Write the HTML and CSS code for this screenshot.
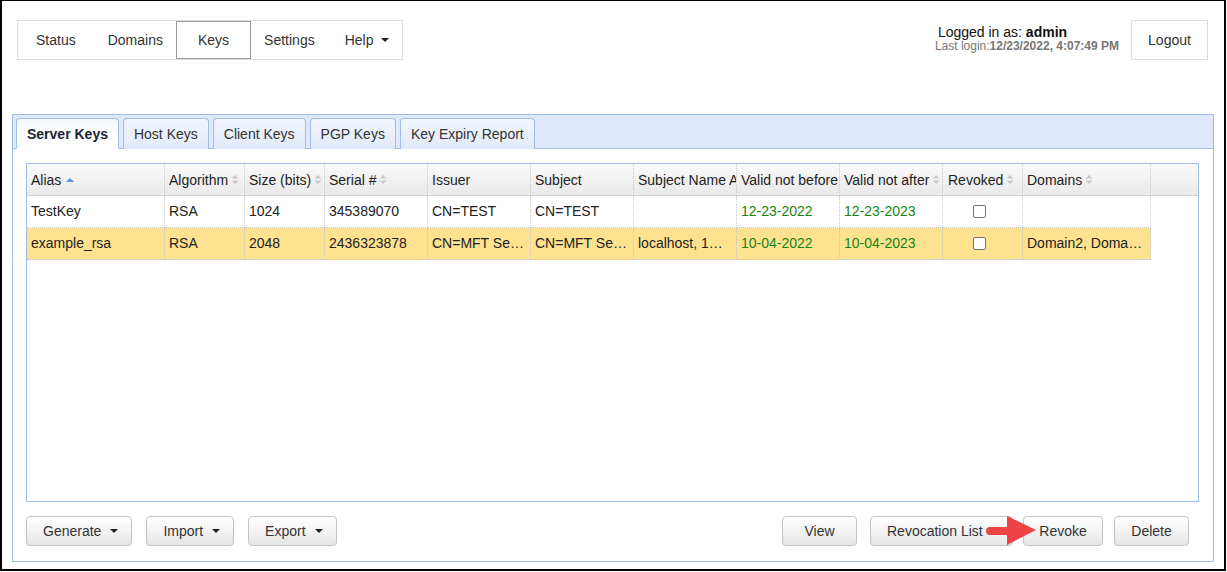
FILE: index.html
```html
<!DOCTYPE html>
<html lang="en">
<head>
<meta charset="utf-8">
<title>Keys</title>
<link rel="stylesheet" href="styles.css">
</head>
<body>
<div class="frame">
  <header class="topbar">
    <nav class="mainnav">
      <a class="nav-item nav-status">Status</a>
      <a class="nav-item nav-domains">Domains</a>
      <a class="nav-item nav-keys active">Keys</a>
      <a class="nav-item nav-settings">Settings</a>
      <a class="nav-item nav-help">Help<span class="caret"></span></a>
    </nav>
    <div class="user">
      <div class="user-line">Logged in as: <b>admin</b></div>
      <div class="user-last">Last login:<b>12/23/2022, 4:07:49 PM</b></div>
    </div>
    <button class="logout">Logout</button>
  </header>

  <section class="panel">
    <div class="tabstrip">
      <div class="tab active">Server Keys</div>
      <div class="tab">Host Keys</div>
      <div class="tab">Client Keys</div>
      <div class="tab">PGP Keys</div>
      <div class="tab">Key Expiry Report</div>
    </div>
    <div class="panel-body">
      <div class="grid">
        <div class="grid-row grid-head">
          <div class="cell">Alias<svg class="sort-asc" width="8" height="4" viewBox="0 0 8 4"><path d="M0 4L4 0L8 4Z"/></svg></div>
          <div class="cell">Algorithm<svg class="sort" width="8" height="9" viewBox="0 0 8 9"><path d="M0.5 3.5L4 0L7.5 3.5Z M0.5 5.5L7.5 5.5L4 9Z"/></svg></div>
          <div class="cell">Size (bits)<svg class="sort" width="8" height="9" viewBox="0 0 8 9"><path d="M0.5 3.5L4 0L7.5 3.5Z M0.5 5.5L7.5 5.5L4 9Z"/></svg></div>
          <div class="cell">Serial #<svg class="sort" width="8" height="9" viewBox="0 0 8 9"><path d="M0.5 3.5L4 0L7.5 3.5Z M0.5 5.5L7.5 5.5L4 9Z"/></svg></div>
          <div class="cell">Issuer</div>
          <div class="cell">Subject</div>
          <div class="cell">Subject Name Alternatives</div>
          <div class="cell">Valid not before</div>
          <div class="cell">Valid not after<svg class="sort" width="8" height="9" viewBox="0 0 8 9"><path d="M0.5 3.5L4 0L7.5 3.5Z M0.5 5.5L7.5 5.5L4 9Z"/></svg></div>
          <div class="cell cell-rev-h">Revoked<svg class="sort" width="8" height="9" viewBox="0 0 8 9"><path d="M0.5 3.5L4 0L7.5 3.5Z M0.5 5.5L7.5 5.5L4 9Z"/></svg></div>
          <div class="cell">Domains<svg class="sort" width="8" height="9" viewBox="0 0 8 9"><path d="M0.5 3.5L4 0L7.5 3.5Z M0.5 5.5L7.5 5.5L4 9Z"/></svg></div>
          <div class="cell filler"></div>
        </div>
        <div class="grid-row">
          <div class="cell">TestKey</div>
          <div class="cell">RSA</div>
          <div class="cell">1024</div>
          <div class="cell">345389070</div>
          <div class="cell">CN=TEST</div>
          <div class="cell">CN=TEST</div>
          <div class="cell"></div>
          <div class="cell date">12-23-2022</div>
          <div class="cell date">12-23-2023</div>
          <div class="cell cell-rev"><span class="check"></span></div>
          <div class="cell"></div>
          <div class="cell filler"></div>
        </div>
        <div class="grid-row selected">
          <div class="cell">example_rsa</div>
          <div class="cell">RSA</div>
          <div class="cell">2048</div>
          <div class="cell">2436323878</div>
          <div class="cell">CN=MFT Server, O=Example</div>
          <div class="cell">CN=MFT Server, O=Example</div>
          <div class="cell">localhost, 127.0.0.1</div>
          <div class="cell date">10-04-2022</div>
          <div class="cell date">10-04-2023</div>
          <div class="cell cell-rev"><span class="check"></span></div>
          <div class="cell">Domain2, Domain3, Domain1</div>
          <div class="cell filler"></div>
        </div>
      </div>
      <div class="actions">
        <button class="btn btn-menu">Generate<span class="caret"></span></button>
        <button class="btn btn-menu">Import<span class="caret"></span></button>
        <button class="btn btn-menu">Export<span class="caret"></span></button>
        <span class="spacer"></span>
        <button class="btn btn-view">View</button>
        <button class="btn btn-revlist">Revocation List</button>
        <button class="btn btn-revoke">Revoke</button>
        <button class="btn btn-delete">Delete</button>
      </div>
    </div>
  </section>
</div>
<svg class="pointer" width="52" height="30" viewBox="0 0 52 30">
  <rect x="0" y="11" width="24" height="8" rx="4" ry="4"/>
  <path d="M21 0L50 14L21 29Z"/>
</svg>
</body>
</html>
```

FILE: styles.css
```css
* {
  box-sizing: border-box;
}

body {
  margin: 0;
  font-family: "Liberation Sans", Arial, sans-serif;
  font-size: 14px;
  color: #333;
  background: #fff;
}

.frame {
  width: 1226px;
  height: 571px;
  border: 2px solid #000;
  border-top-width: 1px;
}

/* ---------- top bar ---------- */
.topbar {
  display: flex;
  align-items: flex-start;
  padding: 19px 16px 0 15px;
}

.mainnav {
  display: flex;
  height: 40px;
  border: 1px solid #ddd;
  padding-left: 2px;
}

.nav-item {
  display: flex;
  align-items: center;
  height: 38px;
  padding: 0 16px;
  color: #333;
  cursor: pointer;
}

.nav-domains {
  padding-right: 13px;
}

.nav-keys {
  border: 1px solid #999;
  padding: 0 21px;
}

.nav-settings {
  padding-left: 13px;
}

.nav-help {
  padding: 0 13px 0 14px;
}

.caret {
  display: inline-block;
  width: 0;
  height: 0;
  border-left: 4px solid transparent;
  border-right: 4px solid transparent;
  border-top: 4px solid #222;
  margin-left: 8px;
}

.user {
  margin-left: auto;
  margin-top: 5px;
  margin-right: 12px;
}

.user-line {
  font-size: 14px;
  line-height: 15px;
  color: #111;
  padding-left: 3px;
}

.user-last {
  font-size: 12px;
  line-height: 13px;
  color: #777;
}

.logout {
  width: 77px;
  height: 40px;
  border: 1px solid #ddd;
  background: #fff;
  font: inherit;
  color: #333;
  padding: 0;
}

/* ---------- panel ---------- */
.panel {
  margin: 54px 10px 0 10px;
  border: 1px solid #9fbde6;
}

.tabstrip {
  display: flex;
  align-items: flex-end;
  gap: 4px;
  height: 34px;
  padding: 3px 0 0 3px;
  background: #dfe9fb;
  border-bottom: 1px solid #9fbde6;
}

.tab {
  height: 31px;
  margin-bottom: -1px;
  padding: 0 10px;
  display: flex;
  align-items: center;
  border: 1px solid #9fbde6;
  border-bottom: none;
  border-radius: 4px 4px 0 0;
  background: linear-gradient(#f2f6fd, #e1eaf9);
  color: #333;
}

.tab.active {
  font-weight: bold;
  color: #1b2233;
  background: linear-gradient(#f4f7fc, #ffffff 60%);
  border-bottom: 1px solid #fff;
}

.panel-body {
  padding: 14px 14px 15px 13px;
  background: #fff;
}

/* ---------- grid ---------- */
.grid {
  height: 339px;
  border: 1px solid #9fbde6;
  background: #fff;
}

.grid-row {
  display: grid;
  grid-template-columns: 138px 80px 80px 103px 103px 103px 103px 103px 103px 80px 128px 1fr;
  height: 32px;
}

.cell {
  display: flex;
  align-items: center;
  padding-left: 4px;
  border-right: 1px dotted #c8c8c8;
  border-bottom: 1px dotted #c8c8c8;
  white-space: nowrap;
  overflow: hidden;
  color: #222;
  min-width: 0;
}

.grid-row:not(.grid-head) .cell {
  display: block;
  line-height: 31px;
  padding-right: 6px;
  text-overflow: ellipsis;
}

.grid-head {
  background: linear-gradient(#fafafa, #e9e9e9);
  border-bottom: 1px solid #d3d3d3;
}

.grid-head .cell {
  border-bottom: none;
  height: 31px;
}

.cell.filler {
  border: none;
  background: transparent;
}

.grid-row.selected .cell:not(.filler) {
  background: #fee290;
}

.cell.date {
  color: #158415;
}

.cell-rev-h {
  padding-left: 5px;
}

.grid-row .cell.cell-rev {
  padding-left: 30px;
}

.check {
  display: inline-block;
  width: 13px;
  height: 13px;
  border: 1px solid #767676;
  border-radius: 2px;
  background: #fff;
  vertical-align: -2px;
}

.sort-asc {
  margin-left: 5px;
  fill: #5b93d3;
}

.sort {
  margin-left: 3px;
  fill: #c9c9c9;
}

/* ---------- actions ---------- */
.actions {
  display: flex;
  margin-top: 14px;
  padding-right: 10px;
  height: 30px;
}

.spacer {
  flex: 1;
}

.btn {
  height: 30px;
  min-width: 75px;
  padding: 0 16px;
  border: 1px solid #c4c4c4;
  border-radius: 4px;
  background: linear-gradient(#ffffff, #e6e6e6);
  font: inherit;
  color: #333;
  display: flex;
  align-items: center;
  justify-content: center;
}

.btn-menu {
  padding: 0 13px 0 16px;
  margin-right: 14px;
}

.btn-menu .caret {
  margin-left: 9px;
  border-top-color: #222;
}

.btn-view {
  margin-right: 13px;
}

.btn-revlist {
  width: 143px;
  margin-right: 10px;
  justify-content: flex-start;
}

.btn-revoke {
  width: 80px;
  margin-right: 11px;
}

.pointer {
  position: absolute;
  left: 986px;
  top: 516px;
  fill: #ef4247;
}
```
